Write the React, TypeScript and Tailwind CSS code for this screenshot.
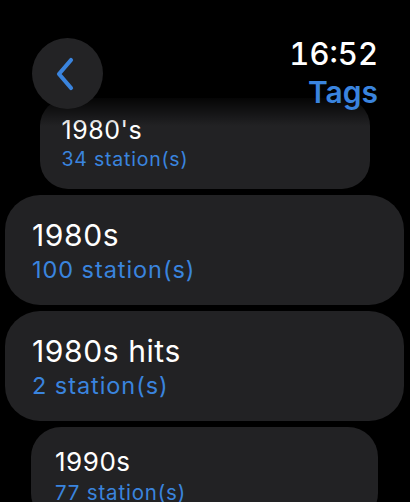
import React from 'react'

type Tag = { name: string; count: number; size: 'sm' | 'lg' | 'md' }

const tags: Tag[] = [
  { name: "1980's", count: 34, size: 'sm' },
  { name: '1980s', count: 100, size: 'lg' },
  { name: '1980s hits', count: 2, size: 'lg' },
  { name: '1990s', count: 77, size: 'md' },
]

const sizes = {
  sm: {
    card: 'w-[330px] h-[91px] rounded-[28px] pl-[22px] pt-[17px]',
    title: 'text-[25px] leading-[30px]',
    sub: 'text-[19.5px] leading-[28px]',
  },
  md: {
    card: 'w-[347px] h-[96px] rounded-[30px] pl-[24px] pt-[19px]',
    title: 'text-[26px] leading-[32px]',
    sub: 'text-[20.5px] leading-[30px]',
  },
  lg: {
    card: 'w-[399px] h-[110px] rounded-[35px] pl-[27px] pt-[22px]',
    title: 'text-[30px] leading-[36px]',
    sub: 'text-[23.5px] leading-[34px]',
  },
}

function TagCard({ tag }: { tag: Tag }) {
  const s = sizes[tag.size]
  return (
    <div className={`${s.card} shrink-0 bg-[#222224] flex flex-col`}>
      <span className={`${s.title} tracking-[0.02em] text-white`}>{tag.name}</span>
      <span className={`${s.sub} tracking-[0.04em] text-[#3a84de]`}>{tag.count} station(s)</span>
    </div>
  )
}

export default function App() {
  return (
    <div
      className="relative w-[410px] h-[502px] bg-black overflow-hidden"
      style={{ fontFamily: 'Inter, "Noto Sans", sans-serif' }}
    >
      <div className="flex flex-col items-center gap-[6px] pt-[98px] pr-[1px]">
        {tags.map((t) => (
          <TagCard key={t.name} tag={t} />
        ))}
      </div>

      {/* header over the list */}
      <div className="absolute inset-x-0 top-0 h-[126px] bg-gradient-to-b from-black from-[74%] to-transparent">
        <div className="flex justify-between pl-[32px] pr-[32px] pt-[36px]">
          <button className="mt-[2px] w-[71px] h-[71px] rounded-full bg-[#232325] flex items-center justify-center">
            <svg width="24" height="34" viewBox="0 0 24 34" className="-ml-[4px]">
              <path
                d="M17 3 L5 17 L17 31"
                fill="none"
                stroke="#3a84de"
                strokeWidth="4.2"
                strokeLinecap="round"
                strokeLinejoin="round"
              />
            </svg>
          </button>
          <div className="flex flex-col items-end">
            <span className="text-[31px] leading-[36px] font-medium text-white tabular-nums">16:52</span>
            <span className="text-[30px] leading-[40px] font-semibold text-[#3a84de]">Tags</span>
          </div>
        </div>
      </div>
    </div>
  )
}
